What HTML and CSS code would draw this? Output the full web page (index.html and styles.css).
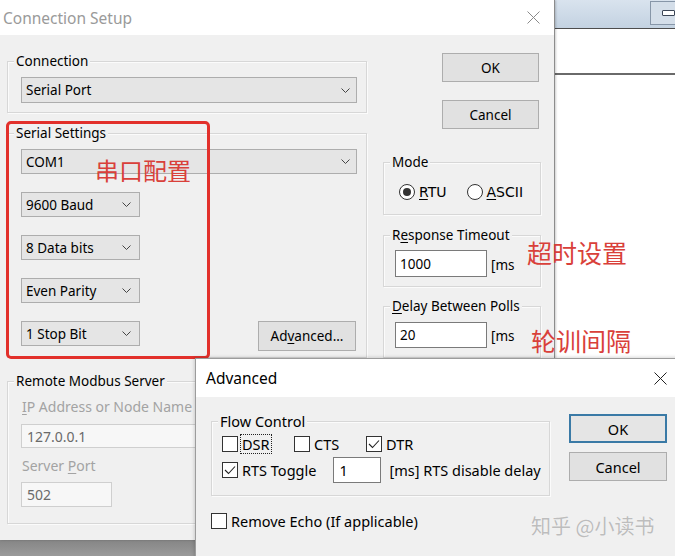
FILE: index.html
```html
<!DOCTYPE html>
<html>
<head>
<meta charset="utf-8">
<link rel="stylesheet" href="styles.css">
</head>
<body>
<div class="screen">
  <div class="bgwin">
    <div class="bgwin-bar"><div class="bgwin-btn"><div class="bgwin-glyph"></div></div></div>
    <div class="bgwin-row"></div>
  </div>

  <div class="dlg-main">
    <div class="titlebar">
      <span class="title title--inactive">Connection Setup</span>
      <svg class="close" width="13" height="13" viewBox="0 0 13 13"><path d="M0.5 0.5L12.5 12.5M12.5 0.5L0.5 12.5" stroke="#8a8a8a" stroke-width="1"/></svg>
    </div>
    <div class="main-body">
      <div class="col-left">
        <div class="group g-conn">
          <div class="group-label">Connection</div>
          <div class="select select--conn"><span>Serial Port</span><svg class="chev" width="9" height="5" viewBox="0 0 9 5"><path d="M0.5 0.5L4.5 4.5L8.5 0.5" fill="none" stroke="#444"/></svg></div>
        </div>
        <div class="group g-serial">
          <div class="group-label">Serial Settings</div>
          <div class="select select--com"><span>COM1</span><svg class="chev" width="9" height="5" viewBox="0 0 9 5"><path d="M0.5 0.5L4.5 4.5L8.5 0.5" fill="none" stroke="#444"/></svg></div>
          <div class="select select--small"><span>9600 Baud</span><svg class="chev" width="9" height="5" viewBox="0 0 9 5"><path d="M0.5 0.5L4.5 4.5L8.5 0.5" fill="none" stroke="#444"/></svg></div>
          <div class="select select--small"><span>8 Data bits</span><svg class="chev" width="9" height="5" viewBox="0 0 9 5"><path d="M0.5 0.5L4.5 4.5L8.5 0.5" fill="none" stroke="#444"/></svg></div>
          <div class="select select--small"><span>Even Parity</span><svg class="chev" width="9" height="5" viewBox="0 0 9 5"><path d="M0.5 0.5L4.5 4.5L8.5 0.5" fill="none" stroke="#444"/></svg></div>
          <div class="last-row">
            <div class="select select--small select--flush"><span>1 Stop Bit</span><svg class="chev" width="9" height="5" viewBox="0 0 9 5"><path d="M0.5 0.5L4.5 4.5L8.5 0.5" fill="none" stroke="#444"/></svg></div>
            <div class="btn btn--adv">Ad<u>v</u>anced...</div>
          </div>
        </div>
        <div class="group g-remote">
          <div class="group-label">Remote Modbus Server</div>
          <div class="dis-label dis-label--ip"><u>I</u>P Address or Node Name</div>
          <div class="dis-input dis-input--ip">127.0.0.1</div>
          <div class="dis-label dis-label--port">Server <u>P</u>ort</div>
          <div class="dis-input dis-input--port">502</div>
        </div>
      </div>
      <div class="col-right">
        <div class="btn btn--main">OK</div>
        <div class="btn btn--main btn--cancel">Cancel</div>
        <div class="group group--narrow g-mode">
          <div class="group-label">Mode</div>
          <div class="radio-row">
            <div class="radio-item"><span class="radio radio--on"></span><span class="radio-text"><u>R</u>TU</span></div>
            <div class="radio-item"><span class="radio"></span><span class="radio-text"><u>A</u>SCII</span></div>
          </div>
        </div>
        <div class="group group--narrow g-resp">
          <div class="group-label">R<u>e</u>sponse Timeout</div>
          <div class="input-row"><div class="input input--ms">1000</div><span class="unit">[ms</span></div>
        </div>
        <div class="group group--narrow g-delay">
          <div class="group-label"><u>D</u>elay Between Polls</div>
          <div class="input-row"><div class="input input--ms input--delay">20</div><span class="unit">[ms</span></div>
        </div>
      </div>
    </div>
  </div>

  <div class="redbox"></div>
  <div class="note note--serial">串口配置</div>
  <div class="note note--timeout">超时设置</div>
  <div class="note note--poll">轮训间隔</div>

  <div class="dlg-adv">
    <div class="adv-title">
      <span class="title">Advanced</span>
      <svg class="close" width="13" height="13" viewBox="0 0 13 13"><path d="M0.5 0.5L12.5 12.5M12.5 0.5L0.5 12.5" stroke="#222" stroke-width="1"/></svg>
    </div>
    <div class="adv-body">
      <div class="adv-left">
        <div class="group group--flow">
          <div class="group-label">Flow Control</div>
          <div class="flow-row1">
            <div class="cb-item"><span class="cb"></span><span class="focus">DSR</span></div>
            <div class="cb-item"><span class="cb"></span><span>CTS</span></div>
            <div class="cb-item"><span class="cb"><svg width="12" height="10" viewBox="0 0 12 10"><path d="M1 5L4.5 8.5L11 1.5" fill="none" stroke="#222" stroke-width="1.1"/></svg></span><span>DTR</span></div>
          </div>
          <div class="flow-row2">
            <div class="cb-item"><span class="cb"><svg width="12" height="10" viewBox="0 0 12 10"><path d="M1 5L4.5 8.5L11 1.5" fill="none" stroke="#222" stroke-width="1.1"/></svg></span><span>RTS Toggle</span></div>
            <div class="input input--rts">1</div>
            <span class="rts-text">[ms] RTS disable delay</span>
          </div>
        </div>
        <div class="cb-item echo"><span class="cb"></span><span>Remove Echo (If applicable)</span></div>
      </div>
      <div class="adv-buttons">
        <div class="btn btn--adv-ok">OK</div>
        <div class="btn btn--adv-cancel">Cancel</div>
      </div>
    </div>
  </div>

  <div class="watermark">知乎 @小读书</div>
</div>
</body>
</html>
```
FILE: styles.css
```css
* { box-sizing: border-box; }
html, body { margin: 0; padding: 0; }
body {
  font-family: "Noto Sans", "Noto Sans CJK SC", sans-serif;
  font-size: 13.5px;
  color: #000;
}
u { text-decoration: underline; text-underline-offset: 2px; text-decoration-thickness: 1px; }

.screen {
  position: relative;
  width: 675px;
  height: 556px;
  overflow: hidden;
  background: linear-gradient(#7f7f7f 0, #7f7f7f 535px, #9a9a9a 556px);
}

/* background window on the right */
.bgwin {
  position: absolute;
  left: 555px;
  top: 0;
  width: 120px;
  height: 556px;
  background: #fff;
  display: flex;
  flex-direction: column;
}
.bgwin-bar {
  height: 29px;
  flex: none;
  background: linear-gradient(#d9e3ee, #c3d2e1);
  border-bottom: 1px solid #4d4d4d;
  display: flex;
  justify-content: flex-end;
  align-items: flex-start;
  padding-top: 1px;
}
.bgwin-btn {
  width: 25px;
  height: 24px;
  border: 1px solid #8796a8;
  border-right: none;
  background: #d4dee9;
  display: flex;
  align-items: center;
  padding-left: 11px;
}
.bgwin-glyph {
  width: 16px;
  height: 6px;
  border: 1px solid #3c4656;
  border-radius: 1px;
  background: #fff;
}
.bgwin-row {
  height: 46px;
  flex: none;
  border-bottom: 2px solid #6a6a6a;
}

/* main dialog */
.dlg-main {
  position: absolute;
  left: 0;
  top: 0;
  width: 555px;
  height: 540px;
  background: #f0f0f0;
  border-right: 1px solid #8c8c8c;
  box-shadow: 1px 0 2px rgba(0, 0, 0, 0.2);
  display: flex;
  flex-direction: column;
}
.titlebar {
  height: 35px;
  flex: none;
  background: #fff;
  display: flex;
  align-items: center;
  justify-content: space-between;
  padding: 0 14px 0 3px;
}
.title { font-size: 15.5px; line-height: 20px; }
.title--inactive { color: #9a9a9a; }
.close { display: block; }

.main-body {
  display: flex;
  padding-left: 7px;
  gap: 16px;
}
.col-left { width: 360px; padding-top: 26px; }
.col-right { width: 158px; padding-top: 18px; }

.group {
  border: 1px solid #d7d7d7;
  box-shadow: inset 1px 1px 0 #fbfbfb, 1px 1px 0 #fbfbfb;
  padding: 0 9px 9px 13px;
}
.group-label {
  margin: -10px 0 0 -7px;
  padding: 0 2px;
  width: max-content;
  line-height: 18px;
  background: #f0f0f0;
}
.group--narrow { padding: 0 9px 9px 11px; }
.group--narrow .group-label { margin-left: -5px; }

.select {
  display: flex;
  align-items: center;
  justify-content: space-between;
  background: #e5e5e5;
  border: 1px solid #adadad;
  padding: 0 6px 0 4px;
  line-height: 18px;
}
.chev { display: block; flex: none; }
.select--conn { height: 26px; margin-top: 7px; }
.select--com { height: 25px; margin-top: 7px; }
.select--small { width: 119px; height: 25px; margin-top: 18px; padding-right: 8px; }
.select--flush { margin-top: 0; }

.g-serial { margin-top: 20px; padding-bottom: 6px; }
.last-row {
  display: flex;
  justify-content: space-between;
  align-items: flex-start;
  margin-top: 18px;
  padding-right: 1px;
}

.btn {
  display: flex;
  align-items: center;
  justify-content: center;
  background: #e1e1e1;
  border: 1px solid #adadad;
  line-height: 18px;
}
.btn--adv { width: 98px; height: 30px; }
.btn--main { width: 97px; height: 29px; margin-left: 59px; }
.btn--cancel { margin-top: 18px; }

.g-remote { margin-top: 23px; padding-bottom: 16px; }
.dis-label { color: #a3a3a3; line-height: 18px; margin-left: 1px; white-space: nowrap; font-size: 14px; }
.dis-label--ip { margin-top: 8px; }
.dis-label--port { margin-top: 9px; }
.dis-input {
  background: #f7f7f7;
  border: 1px solid #cfcfcf;
  color: #6a6a6a;
  padding-left: 5px;
  display: flex;
  align-items: center;
  font-size: 14px;
}
.dis-input--ip { height: 24px; margin-top: 8px; }
.dis-input--port { height: 25px; width: 91px; margin-top: 7px; }

.g-mode { margin-top: 33px; padding-bottom: 13px; }
.radio-row {
  display: flex;
  gap: 20px;
  margin: 12px 0 0 4px;
  line-height: 18px;
}
.radio-item { display: flex; align-items: center; gap: 4px; }
.radio {
  width: 16px;
  height: 16px;
  border: 1px solid #333;
  border-radius: 50%;
  background: #fff;
  display: flex;
  align-items: center;
  justify-content: center;
}
.radio--on::after {
  content: "";
  width: 8px;
  height: 8px;
  border-radius: 50%;
  background: #333;
}
.radio-text { font-family: "DejaVu Sans", sans-serif; font-size: 14px; }

.g-resp { margin-top: 20px; }
.g-delay { margin-top: 19px; }
.input-row { display: flex; align-items: center; gap: 4px; margin-top: 6px; }
.g-delay .input-row { margin-top: 7px; }
.input {
  background: #fff;
  border: 1px solid #7a7a7a;
  display: flex;
  align-items: center;
  padding-left: 4px;
}
.input--ms { width: 92px; height: 27px; }
.input--delay { height: 26px; }
.unit { padding-top: 2px; }

/* annotations */
.redbox {
  position: absolute;
  left: 6px;
  top: 121px;
  width: 204px;
  height: 238px;
  border: 3px solid #e2302b;
  border-radius: 5px;
}
.note {
  position: absolute;
  font-family: "Noto Sans CJK SC", sans-serif;
  color: #d9403a;
  line-height: 1;
  white-space: nowrap;
}
.note--serial { left: 95px; top: 158px; font-size: 24px; }
.note--timeout { left: 527px; top: 240px; font-size: 25px; }
.note--poll { left: 531px; top: 328px; font-size: 25px; }

/* advanced dialog */
.dlg-adv {
  position: absolute;
  left: 195px;
  top: 358px;
  width: 500px;
  height: 220px;
  background: #f0f0f0;
  border: 1px solid #9c9c9c;
  box-shadow: -1px -1px 3px rgba(0, 0, 0, 0.15);
  font-size: 14.5px;
}
.adv-title {
  height: 38px;
  background: #fff;
  display: flex;
  align-items: center;
  justify-content: space-between;
  padding: 0 27px 0 10px;
}
.adv-body {
  display: flex;
  align-items: flex-start;
  padding-left: 15px;
}
.adv-left { width: 339px; flex: none; }
.group--flow { margin-top: 24px; padding: 0 9px 12px 10px; }
.group--flow .group-label { margin-left: -4px; }
.flow-row1 {
  display: grid;
  grid-template-columns: 72px 72px auto;
  margin-top: 5px;
  line-height: 18px;
}
.cb-item { display: flex; align-items: center; gap: 4px; line-height: 18px; white-space: nowrap; flex: none; }
.cb {
  width: 16px;
  height: 16px;
  flex: none;
  border: 1px solid #333;
  background: #fff;
  display: flex;
  align-items: center;
  justify-content: center;
}
.cb svg { display: block; }
.focus { outline: 1px dotted #222; outline-offset: 0; padding: 0 1px; margin-left: -1px; }
.flow-row2 { display: flex; align-items: center; margin-top: 4px; white-space: nowrap; }
.input--rts { width: 48px; height: 26px; margin-left: 17px; padding-left: 5px; flex: none; }
.rts-text { margin-left: 8px; white-space: nowrap; flex: none; }
.echo { margin-top: 16px; }

.adv-buttons { margin: 17px 0 0 19px; display: flex; flex-direction: column; gap: 9px; flex: none; }
.btn--adv-ok { width: 98px; height: 29px; border: 2px solid #3a7aa6; background: #e5e5e5; }
.btn--adv-cancel { width: 98px; height: 29px; }

.watermark {
  position: absolute;
  left: 531px;
  top: 512px;
  font-family: "Noto Sans CJK SC", sans-serif;
  font-size: 20px;
  line-height: 28px;
  color: #bdbdbd;
  text-shadow: 0 0 1px #fff;
  white-space: nowrap;
}
```
